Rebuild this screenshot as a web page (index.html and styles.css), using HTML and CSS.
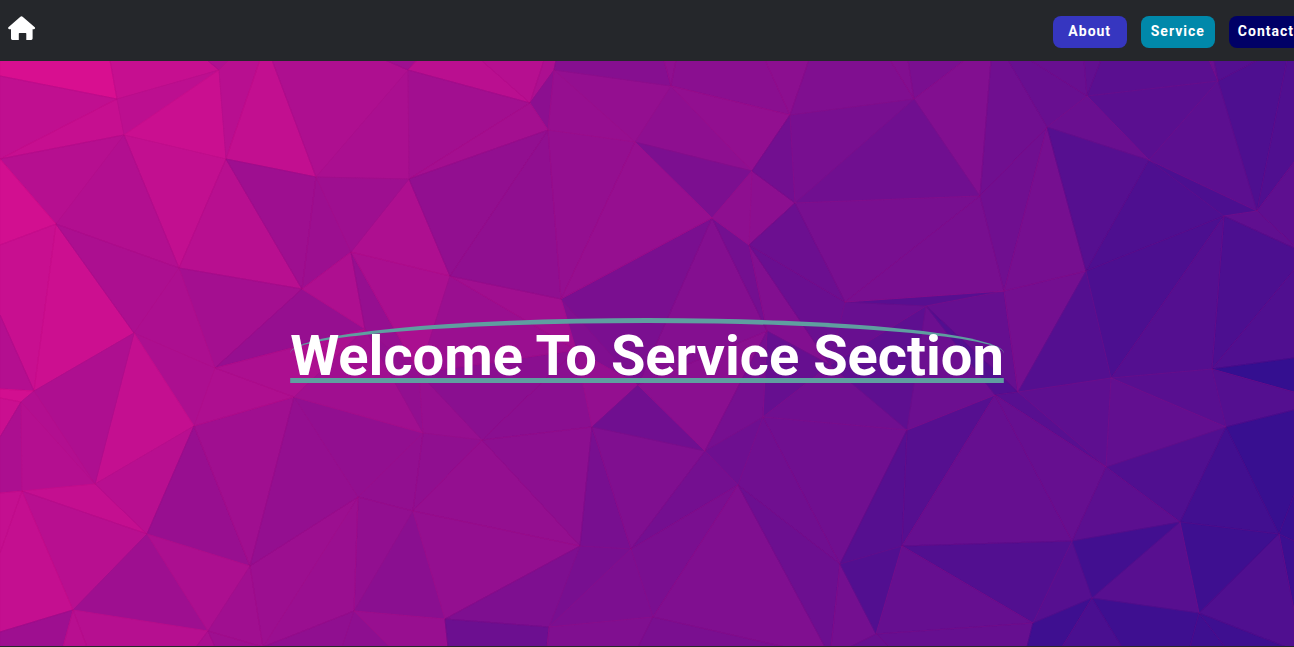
FILE: index.html
```html
<!DOCTYPE html>
<html lang="en">
<head>
<meta charset="utf-8">
<meta name="viewport" content="width=device-width, initial-scale=1">
<title>Service</title>
<link rel="stylesheet" href="styles.css">
</head>
<body>
<header class="navbar">
  <a class="home" href="#" aria-label="Home">
    <svg viewBox="0 0 28 26" aria-hidden="true"><path d="M12.1.9Q13.500-.3 14.900.9L26.800 11.200Q27.700 12.600 26 13.200H24.600V22.600Q24.600 24 23.200 24H18.300V17.600Q18.300 16.900 17.600 16.900H11.500Q10.800 16.900 10.800 17.600V24H4.400Q3 24 3 22.600V13.200H1.200Q-.5 12.600.4 11.200Z"/></svg>
  </a>
  <nav class="links">
    <a class="link about" href="#about">About</a>
    <a class="link service" href="#service">Service</a>
    <a class="link contact" href="#contact">Contact</a>
  </nav>
</header>
<main class="hero">
  <svg class="mesh" viewBox="0 61 1294 585" preserveAspectRatio="xMidYMid slice" aria-hidden="true"></svg>
  <h1 class="title">Welcome To Service Section</h1>
</main>
<script src="mesh.js"></script>
</body>
</html>
```
FILE: styles.css
```css
* {
  box-sizing: border-box;
}

body {
  margin: 0;
  min-height: 100vh;
  display: flex;
  flex-direction: column;
  overflow: hidden;
  background: #25272b;
  color: #fff;
  font-family: Roboto, sans-serif;
}

.navbar {
  display: flex;
  justify-content: space-between;
  align-items: flex-start;
  height: 61px;
  padding: 16px 0 0 8px;
}

.home svg {
  display: block;
  width: 28px;
  height: 26px;
  fill: #fff;
}

.links {
  display: flex;
  gap: 14px;
  margin-right: -9px;
}

.link {
  min-width: 74px;
  height: 32px;
  padding: 0 10px;
  border-radius: 8px;
  color: #fff;
  font-size: 14px;
  font-weight: 700;
  letter-spacing: 1px;
  line-height: 31px;
  text-align: center;
  text-decoration: none;
}

.about {
  background: #3636c0;
}

.service {
  background: #0088aa;
}

.contact {
  padding: 0 9px;
  background: #000066;
}

.hero {
  position: relative;
  flex: 1;
  display: flex;
  justify-content: center;
  align-items: center;
  margin-bottom: 1px;
  overflow: hidden;
  background: linear-gradient(90deg, #c80f90, #380f90);
}

.mesh {
  position: absolute;
  inset: 0;
  width: 100%;
  height: 100%;
}

.edge {
  fill: none;
  stroke: #b00a70;
  stroke-opacity: 0.08;
  stroke-width: 1;
}

.title {
  position: relative;
  margin: 0;
  border-top: 5px solid #5f9ea0;
  border-radius: 50%;
  font-size: 56px;
  font-weight: 700;
  line-height: normal;
  text-decoration: underline 5px #5f9ea0;
}
```
FILE: mesh.js
```js
// Low-poly backdrop. Corners are named; t/b/l/r plus a number is a point on that side.
const corners = {};
`A 0,76|B 117,99|D 124,135|E 0,159|F 219,70|G 226,159|I 316,177|J 56,224|K 179,268|L 302,289
M 134,333|P 34,391|R 215,368|S 194,426|T 95,484|V 21,402|W 22,491|X 147,534|Y 73,610|Z 208,631
Aa 250,566|Ab 294,397|Ac 351,252|Ad 365,329|Ae 423,433|Ag 419,373|Ah 450,276|Ai 482,440|Ak 561,299
Am 638,385|Ao 592,427|Ap 576,350|Aq 408,70|Ar 530,103|As 548,130|At 554,70|Au 409,179|Av 671,86
Aw 635,142|Ax 712,218|Ay 752,171|Az 790,115|Ba 795,203|Bb 749,245|Bc 914,99|Bd 980,196|Be 845,302
Bf 767,331|Bg 705,451|Bh 830,365|Bi 763,417|Bk 907,430|Bl 926,306|Bm 1004,291|Bn 995,395|Bx 1018,392
Bo 1047,127|Bp 1086,271|Br 1087,96|Bs 1149,160|Bt 1218,81|Bu 1257,211|Bv 1224,216|Bw 1111,378
By 1212,369|Bz 1226,427|Ca 1106,467|Cb 1072,541|Cc 1180,522|Cd 1279,534|Ce 1092,598|Cf 1199,613
Cg 1033,623|Ch 902,546|Ci 840,564|Cj 876,634|Ck 738,485|Cl 631,549|Cm 653,617|Cn 580,546|Co 549,627
Cp 445,619|Cq 413,511|Cr 358,497|Cs 354,611`.split(/[|\n]/).forEach(line => {
  const [name, at] = line.split(' ');
  corners[name] = at;
});

const sides = {
  t: n => `${n},60`,
  b: n => `${n},647`,
  l: n => `0,${n}`,
  r: n => `1294,${n}`
};
const locate = key => corners[key] || sides[key[0]](key.slice(1));

// Each facet: red level, then its corners.
const facets = `216 t0 A B t110|192 A B E|198 B D E|198 t110 B F t207|188 B D F|175 t207 F t229
202 D F G|184 F G t260 t229|194 G I t272 t260|194 D G K|182 E D J|178 D J K|210 E J l245
200 l245 J P l315|180 l315 P l389|204 J P M|172 J K M|184 K G L|158 G I L|156 I L Ac
174 t272 I Aq t385|170 I Aq Au|158 t385 Aq t417|164 K L R|172 K M R|150 L R Ad|174 L Ac Ad
150 Ac Ad Ag|170 Ac Ah Ag|174 Ac Ah Au|158 I Au Ac|172 M R S|196 M S T|174 P M T|210 l389 P V l398
202 V l398 l437|178 V P T|172 V l437 l493 W|180 V W T|196 W T X|184 T X S|184 W X Y|196 W Y l632 l553
196 W l553 l493|158 X Y Z|152 S X Aa|172 X Aa Z|160 S Aa Ab|174 R S Ab|172 R Ad Ab|158 Y l632 l647 b63
182 Y Z b196 b87|184 Y b87 b63|170 Z b215 b196|160 Z Aa b263|158 Z b263 b215|156 Aa b263 Cr
148 Aa Ab Cr|146 Ab Ae Cr|160 Ab Ad Ae|146 Ad Ag Ae|150 Ae Ag Ai|146 Ae Cr Cq|144 Ae Ai Cq
148 Cq Ai Cn|138 Ag Ai Ap|138 Ai Ap Ao|140 Ai Ao Cn|128 Ap Ak Am|148 Ap Ao Am|154 Ag Ah Ap
160 Ah Ak Ap|146 Cr Cq Cs|154 Cr Cs b263|138 Cq Cs Cp|148 Cq Cn Cp|144 Cs b263 b342|142 Cs b342 b390
152 Cs Cp b448 b390|126 Cn Cp Co|108 Cp Co b547 b448|120 Cn Co Cl|120 Ao Cn Cl|124 Cl Co Cm
128 Co Cm b638 b547|128 Ao Cl Bg|112 Ao Am Bg|138 Am Bf Bg|132 Am Ax Bf|122 Ak Ax Am|116 Ax Bb Bf
130 Bb Bf Bh|106 Bb Bh Be|102 Bf Bi Bh|118 Bf Bi Bg|112 Bh Bi Bk|112 Bi Bk Ci|110 Bg Bi Ck
112 Bi Ck Ci|116 Bg Ck Cl|122 Ck Cl Cm|128 Ck Cm b785 b825|122 Cm b785 b638|108 Ck Ci b831 b825
116 Ci Cj b850 b831|104 Cj b850 b890|86 Bk Ch Ci|82 Ch Ci Cj|86 Bk Bn Ch|102 Ch Bn Cb|82 Ch Cb Cg
102 Ch Cj Cg|102 Cj Cg b1027 b890|86 Cb Ce Cg|62 Cg Ce b1062 b1027|108 Bk Bl Bn|94 Bh Bl Bk
104 Be Bl Bh|88 Be Bm Bl|102 Bl Bm Bx|82 Bl Bx Bn|116 Bm Bp Bx|186 t417 Aq Ar t481|182 Ar t481 t544
172 Ar t544 t556 At|140 Ar At As|162 Aq Ar Au|164 Ar Au As|146 Au As Ah|144 As Ah Ak|148 As Aw Ak
150 At As Aw|148 At Aw Av|134 At Av t664 t556|142 Av t664 t676|138 Av Az t765 t676|140 Az t765 t809
128 Az t809 t890 Bc|130 Bc t890 t908|122 Bc t908 t965|130 Bc t965 t991 Bd|142 Av Aw Ay|146 Av Ay Az
124 Aw Ay Ax|150 Aw Ax Ak|142 Ax Ay Bb|140 Ay Bb Ba|114 Ay Az Ba|120 Az Bc Ba|112 Bc Ba Bd
120 Ba Bd Be|108 Bb Ba Be|120 Bd Be Bm|112 Bd Bo t1008 t991|112 Bd Bo Bm|118 Bo Bm Bp
104 Bo Br t1030 t1008|104 Br t1030 t1084|98 Br t1084 t1101|90 Br Bt t1209 t1101|104 Bt t1209 t1214
84 Bt t1214 t1258|90 Br Bs Bt|106 Bo Br Bs|86 Bo Bs Bp|78 Bs Bp Bv|76 Bs Bu Bv|92 Bt Bs Bu
78 Bu Bt t1258 t1287|80 Bu t1287 r60 r162|94 Bu r162 r245|96 Bv Bu r245 r248|76 Bv r248 r270 By
80 By r270 r358|76 Bp Bv Bw|84 Bv Bw By|84 Bp Bw Bx|88 Bn Bx Ca|94 Bx Bw Ca|88 Bw By Bz
98 Bw Ca Bz|52 By r358 r392|84 By r392 r410 Bz|80 Ca Bz Cc|102 Bn Ca Cb|92 Ca Cb Cc|66 Bz Cc Cd
56 Bz r410 r495 Cd|56 Cd r495 r541|60 Cd r541 r610|80 Cd Cf r650 r610|62 Cc Cd Cf|88 Cc Ce Cf
66 Cb Ce Cc|74 Ce b1062 b1122|62 Ce Cf b1190 b1122|62 Cf b1190 b1225|62 Cf b1225 r650`.split(/[|\n]/);

const mesh = document.querySelector('.mesh');
const add = (points, attrs) => {
  const shape = document.createElementNS('http://www.w3.org/2000/svg', 'polygon');
  shape.setAttribute('points', points);
  Object.entries(attrs).forEach(([name, value]) => shape.setAttribute(name, value));
  mesh.append(shape);
};
const shapes = facets.map(line => {
  const [red, ...keys] = line.split(' ');
  return { color: `rgb(${red},15,144)`, points: keys.map(locate).join(' ') };
});
shapes.forEach(s => add(s.points, { fill: s.color, stroke: s.color, 'stroke-width': 1 }));
shapes.forEach(s => add(s.points, { class: 'edge' }));
```
